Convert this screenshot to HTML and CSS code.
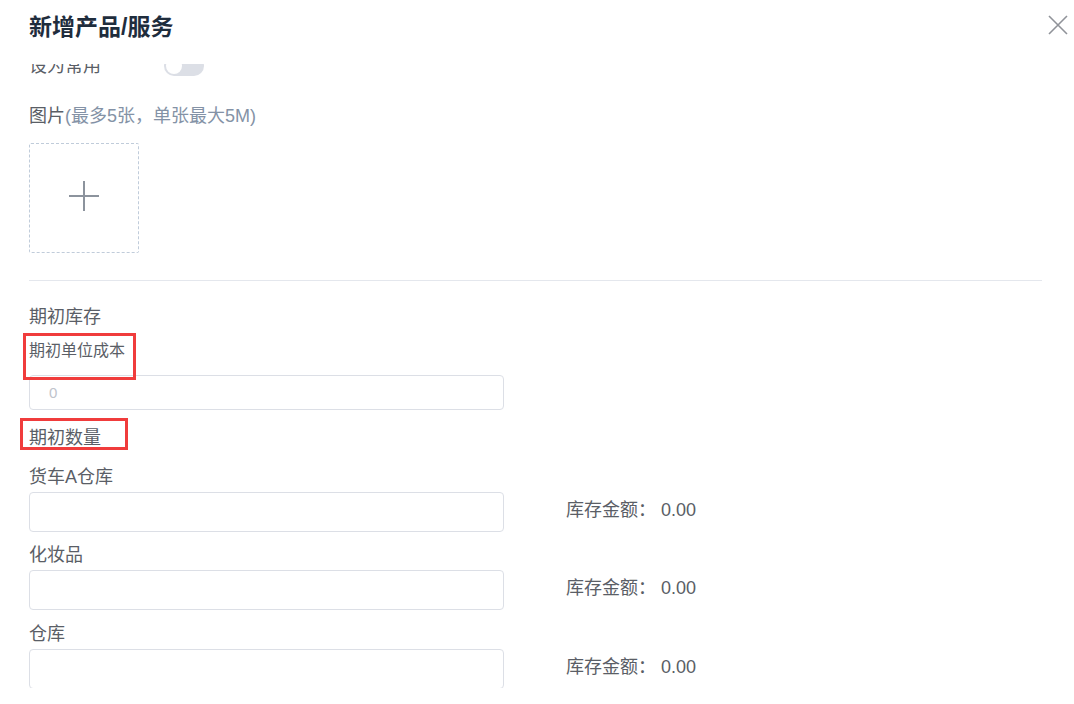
FILE: index.html
```html
<!DOCTYPE html>
<html lang="zh-CN">
<head>
    <meta charset="UTF-8">
    <title>新增产品/服务</title>
    <link rel="stylesheet" href="styles.css">
</head>
<body>
    <div class="dialog">
        <!-- Header -->
        <div class="dialog-header">
            <h2 class="dialog-title">新增产品/服务</h2>
            <button class="dialog-close" aria-label="关闭">
                <svg width="20" height="20" viewBox="0 0 20 20">
                    <path d="M1 1 L19 19 M19 1 L1 19" stroke="#909399" stroke-width="1.6" fill="none"/>
                </svg>
            </button>
        </div>

        <!-- Body (scrolled) -->
        <div class="dialog-body">
            <div class="body-inner">
                <div class="switch-row">
                    <span class="label">设为常用</span>
                    <span class="switch"><span class="switch-knob"></span></span>
                </div>

                <div class="label pic-label">图片<span class="hint">(最多5张，单张最大5M)</span></div>
                <div class="uploader">
                    <svg width="30" height="30" viewBox="0 0 30 30">
                        <path d="M15 0 V30 M0 15 H30" stroke="#8c939d" stroke-width="2" fill="none"/>
                    </svg>
                </div>

                <hr class="divider">

                <div class="label section-label">期初库存</div>
                <div class="label small-label">期初单位成本</div>
                <input class="input input-sm" type="text" placeholder="0">

                <div class="label qty-label">期初数量</div>

                <div class="warehouse">
                    <div class="label">货车A仓库</div>
                    <div class="warehouse-row">
                        <input class="input" type="text">
                        <span class="amount">库存金额： 0.00</span>
                    </div>
                </div>
                <div class="warehouse">
                    <div class="label">化妆品</div>
                    <div class="warehouse-row">
                        <input class="input" type="text">
                        <span class="amount">库存金额： 0.00</span>
                    </div>
                </div>
                <div class="warehouse last">
                    <div class="label">仓库</div>
                    <div class="warehouse-row">
                        <input class="input" type="text">
                        <span class="amount">库存金额： 0.00</span>
                    </div>
                </div>

                <!-- annotation marks -->
                <div class="mark mark-cost"></div>
                <div class="mark mark-qty"></div>
            </div>
        </div>
    </div>
</body>
</html>
```

FILE: styles.css
```css
* {
    margin: 0;
    padding: 0;
    box-sizing: border-box;
    font-family: 'Liberation Sans', 'Noto Sans CJK SC', sans-serif;
}

body {
    background: #fff;
    width: 1074px;
    height: 704px;
    overflow: hidden;
}

.dialog {
    width: 1074px;
    height: 704px;
    background: #fff;
}

/* Header */
.dialog-header {
    height: 64px;
    padding: 14px 32px 0 29px;
    display: flex;
    justify-content: space-between;
    align-items: flex-start;
    background: #fff;
    position: relative;
    z-index: 2;
}

.dialog-title {
    font-size: 23px;
    line-height: 27px;
    font-weight: bold;
    color: #1f2d3d;
}

.dialog-close {
    border: none;
    background: none;
    width: 20px;
    height: 20px;
    margin-right: -26px;
    margin-top: 1px;
    cursor: pointer;
}

/* Body */
.dialog-body {
    height: 624px;
    overflow: hidden;
}

.body-inner {
    position: relative;
    margin-top: -8px;
    padding: 0 32px 0 29px;
}

.label {
    font-size: 18px;
    line-height: 24px;
    color: #5a5e66;
}

.switch-row {
    display: flex;
    align-items: center;
    height: 20px;
    gap: 63px;
}

.switch {
    width: 40px;
    height: 20px;
    border-radius: 10px;
    background: #dcdfe6;
    position: relative;
}

.switch-knob {
    position: absolute;
    top: 2px;
    left: 2px;
    width: 16px;
    height: 16px;
    border-radius: 50%;
    background: #fff;
}

.pic-label {
    margin-top: 28px;
}

.hint {
    color: #8492a6;
}

.uploader {
    margin-top: 15px;
    width: 110px;
    height: 110px;
    border: 1px dashed #c0ccda;
    border-radius: 2px;
    display: flex;
    justify-content: center;
    align-items: center;
    padding-bottom: 4px;
}

.divider {
    margin-top: 27px;
    border: none;
    height: 1px;
    background: #e4e7ed;
}

.section-label {
    margin-top: 24px;
}

.small-label {
    margin-top: 10px;
    font-size: 16px;
}

.input {
    display: block;
    width: 475px;
    height: 40px;
    border: 1px solid #dcdfe6;
    border-radius: 4px;
    padding: 0 19px;
    font-size: 15px;
    color: #606266;
    outline: none;
    background: #fff;
}

.input::placeholder {
    color: #c0c4cc;
}

.input-sm {
    margin-top: 12px;
    height: 35px;
}

.qty-label {
    margin-top: 16px;
}

.warehouse {
    margin-top: 15px;
}

.warehouse + .warehouse {
    margin-top: 11px;
}

.warehouse.last {
    margin-top: 12px;
}

.warehouse-row {
    margin-top: 3px;
    display: flex;
    align-items: center;
    gap: 62px;
}

.amount {
    font-size: 18px;
    line-height: 24px;
    color: #5a5e66;
    margin-top: -4px;
}

/* red annotation boxes */
.mark {
    position: absolute;
    border: 3px solid #f03c3c;
}

.mark-cost {
    left: 23px;
    top: 277px;
    width: 113px;
    height: 47px;
}

.mark-qty {
    left: 20px;
    top: 362px;
    width: 108px;
    height: 32px;
}
```
